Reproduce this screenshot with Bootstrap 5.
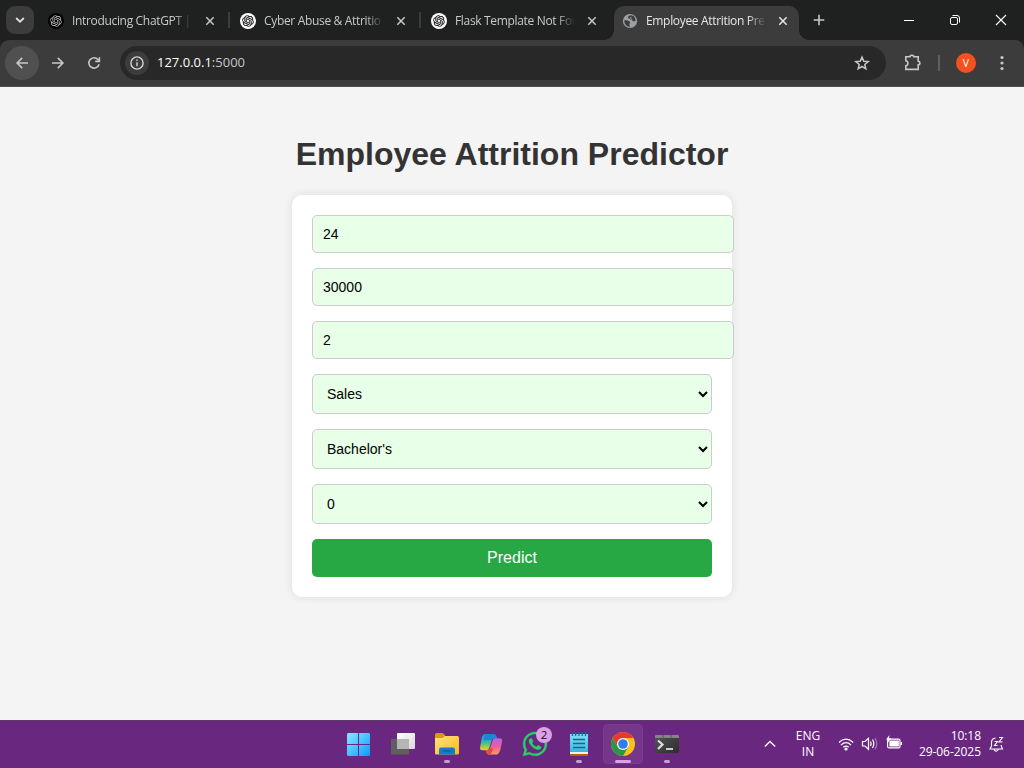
<!DOCTYPE html>
<html lang="en">
<head>
<meta charset="utf-8">
<title>Employee Attrition Predictor</title>
<link href="https://cdn.jsdelivr.net/npm/bootstrap@5.3.0/dist/css/bootstrap.min.css" rel="stylesheet">
<style>
body{height:768px;overflow:hidden;background:#f4f4f4;font-family:"Open Sans","Noto Sans",sans-serif}
svg{display:block;flex:none}
.strip{height:40px;background:#1f2120;padding-left:6px;color:#c8c8c8}
.tabsearch{width:28px;height:28px;border-radius:9px;background:#3c3c3c;margin:6px 7px 6px 0}
.tab{width:185px;height:34px;margin:6px 6px 0 0;padding:0 7px 5px 8px;position:relative}
.tab:nth-child(2){padding-left:7px}
.tab+.tab:not(.current)::before{content:"";position:absolute;left:-4px;top:6px;width:2px;height:16px;background:#3c3e3d}
.tab .label{width:121px;margin-left:8px;white-space:nowrap;font-size:12px;letter-spacing:-.33px;line-height:18px;-webkit-mask-image:linear-gradient(90deg,#000 84%,transparent 99%);mask-image:linear-gradient(90deg,#000 84%,transparent 99%)}
.tab.current{background:#3c3c3c;border-radius:10px 10px 0 0;color:#e6e6e6}
.tab.current::before,.tab.current::after{content:"";position:absolute;bottom:0;width:10px;height:10px}
.tab.current::before{left:-10px;background:radial-gradient(circle at 0 0,transparent 9.6px,#3c3c3c 10.2px)}
.tab.current::after{right:-10px;background:radial-gradient(circle at 100% 0,transparent 9.6px,#3c3c3c 10.2px)}
.toolwrap{background:#1f2120;height:47px}
.toolbar{height:47px;background:#3c3c3c;border-radius:9px 9px 0 0;border-bottom:1px solid #505050;padding-left:5px}
.round{width:34px;height:34px;border-radius:50%;margin-right:2px}
.round.on{background:#505050}
.omni{width:766px;height:34px;border-radius:17px;background:#282828;margin-left:7px;padding:0 14px 0 5px}
.info{width:24px;height:24px;border-radius:50%;background:#3c3c3c;margin-right:8px}
.url{font-size:13px;color:#c7c7c7;letter-spacing:0}
.url b{font-weight:400;color:#fff}
.page{height:633px;padding-top:47px;font-family:"Liberation Sans",Arial,sans-serif}
.page h1{font-size:32px;font-weight:700;line-height:40px;color:#333;margin:0 0 21px}
.predictor{width:440px;height:402px;padding:20px;background:#fff;border-radius:10px;box-shadow:0 0 10px rgba(0,0,0,.1);gap:15px}
.predictor input,.predictor select{background:#e8ffe8;border:1px solid #ccc;border-radius:5px;font-size:14px;color:#000;padding:10px;line-height:normal;outline:0}
.predictor input{width:422px;height:38px;flex:none}
.predictor select{width:400px;height:40px}
.predictor button{width:400px;height:38px;background:#28a745;border-radius:5px;border:0;color:#fff;font-size:16px}
.taskbar{height:48px;background:#6a277f;border-top:1px solid #5d3b68;color:#fff}
.apps{margin-left:337px;margin-top:-1px}
.app{position:relative}
.count{position:absolute;left:23px;top:7px;width:16px;height:16px;border-radius:50%;background:#dd9fe6;color:#111;font-size:11.5px;line-height:16px;text-align:center}
.tray{font-size:12px;line-height:16px;letter-spacing:-.05px;margin-left:74px;margin-top:-1px}
.lang{width:62px}
.clock{width:77px;margin-right:8px}
</style>
</head>
<body>
<svg width="0" height="0" class="position-absolute">
<defs>
<symbol id="knot" viewBox="0 0 24 24"><path d="M22.2819 9.8211a5.9847 5.9847 0 0 0-.5157-4.9108 6.0462 6.0462 0 0 0-6.5098-2.9A6.0651 6.0651 0 0 0 4.9807 4.1818a5.9847 5.9847 0 0 0-3.9977 2.9 6.0462 6.0462 0 0 0 .7427 7.0966 5.98 5.98 0 0 0 .511 4.9107 6.051 6.051 0 0 0 6.5146 2.9001A5.9847 5.9847 0 0 0 13.2599 24a6.0557 6.0557 0 0 0 5.7718-4.2058 5.9894 5.9894 0 0 0 3.9977-2.9001 6.0557 6.0557 0 0 0-.7475-7.0729zm-9.022 12.6081a4.4755 4.4755 0 0 1-2.8764-1.0408l.1419-.0804 4.7783-2.7582a.7948.7948 0 0 0 .3927-.6813v-6.7369l2.02 1.1686a.071.071 0 0 1 .038.052v5.5826a4.504 4.504 0 0 1-4.4945 4.4944zm-9.6607-4.1254a4.4708 4.4708 0 0 1-.5346-3.0137l.142.0852 4.783 2.7582a.7712.7712 0 0 0 .7806 0l5.8428-3.3685v2.3324a.0804.0804 0 0 1-.0332.0615L9.74 19.9502a4.4992 4.4992 0 0 1-6.1408-1.6464zM2.3408 7.8956a4.485 4.485 0 0 1 2.3655-1.9728V11.6a.7664.7664 0 0 0 .3879.6765l5.8144 3.3543-2.0201 1.1685a.0757.0757 0 0 1-.071 0l-4.8303-2.7865A4.504 4.504 0 0 1 2.3408 7.872zm16.5963 3.8558L13.1038 8.364 15.1192 7.2a.0757.0757 0 0 1 .071 0l4.8303 2.7913a4.4944 4.4944 0 0 1-.6765 8.1042v-5.6772a.79.79 0 0 0-.407-.667zm2.0107-3.0231l-.142-.0852-4.7735-2.7818a.7759.7759 0 0 0-.7854 0L9.409 9.2297V6.8974a.0662.0662 0 0 1 .0284-.0615l4.8303-2.7866a4.4992 4.4992 0 0 1 6.6802 4.66zM8.3065 12.863l-2.02-1.1638a.0804.0804 0 0 1-.038-.0567V6.0742a4.4992 4.4992 0 0 1 7.3757-3.4537l-.142.0805L8.704 5.459a.7948.7948 0 0 0-.3927.6813zm1.0976-2.3654l2.602-1.4998 2.6069 1.4998v2.9994l-2.5974 1.4997-2.6067-1.4997Z"/></symbol>
<symbol id="close" viewBox="0 0 10 10"><path d="M1.300 1.300l7.400 7.400M8.700 1.300L1.300 8.700" stroke="currentColor" stroke-width="1.500"/></symbol>
<linearGradient id="win" x1="0" y1="0" x2="1" y2="1"><stop stop-color="#90e4ff"/><stop offset=".5" stop-color="#46c4fb"/><stop offset="1" stop-color="#0a9bf8"/></linearGradient>
<linearGradient id="tvw" x1="0" y1="0" x2="1" y2="1"><stop stop-color="#fff"/><stop offset="1" stop-color="#d8d8d8"/></linearGradient>
<linearGradient id="fold" x1="0" y1="0" x2="1" y2="1"><stop stop-color="#ffe38a"/><stop offset="1" stop-color="#fdb90f"/></linearGradient>
<linearGradient id="cpa" x1="0" y1="0" x2="0" y2="1"><stop stop-color="#1f9be8"/><stop offset=".5" stop-color="#2fbfa0"/><stop offset="1" stop-color="#f4cf1d"/></linearGradient>
<linearGradient id="cpb" x1="0" y1="0" x2="0" y2="1"><stop stop-color="#b165ee"/><stop offset=".5" stop-color="#ee5c9a"/><stop offset="1" stop-color="#ff9a62"/></linearGradient>
<linearGradient id="note" x1="0" y1="0" x2="0" y2="1"><stop stop-color="#7ee0f5"/><stop offset="1" stop-color="#3fb3dc"/></linearGradient>
<linearGradient id="term" x1="0" y1="0" x2="1" y2="1"><stop stop-color="#555"/><stop offset="1" stop-color="#2c2c2c"/></linearGradient>
</defs></svg>

<header>
<div class="strip d-flex align-items-start">
  <div class="tabsearch d-flex align-items-center justify-content-center"><svg width="12" height="12" viewBox="0 0 12 12" fill="none" stroke="#e3e3e3" stroke-width="1.800"><path d="M2.200 4l3.800 3.800L9.800 4"/></svg></div>
  <div class="tab d-flex align-items-center">
    <svg width="16" height="16" viewBox="0 0 16 16"><circle cx="8" cy="8" r="8"/><use href="#knot" x="2.200" y="2.200" width="11.600" height="11.600" fill="#ccc"/></svg>
    <span class="label">Introducing ChatGPT |</span>
    <svg class="ms-auto me-1" width="10" height="10"><use href="#close"/></svg></div>
  <div class="tab d-flex align-items-center">
    <svg width="16" height="16" viewBox="0 0 16 16"><circle cx="8" cy="8" r="8" fill="#fff"/><use href="#knot" x="2.200" y="2.200" width="11.600" height="11.600" fill="#111" stroke="#111" stroke-width=".4"/></svg>
    <span class="label">Cyber Abuse &amp; Attritio</span>
    <svg class="ms-auto me-1" width="10" height="10"><use href="#close"/></svg></div>
  <div class="tab d-flex align-items-center">
    <svg width="16" height="16" viewBox="0 0 16 16"><circle cx="8" cy="8" r="8" fill="#fff"/><use href="#knot" x="2.200" y="2.200" width="11.600" height="11.600" fill="#111" stroke="#111" stroke-width=".4"/></svg>
    <span class="label">Flask Template Not Fou</span>
    <svg class="ms-auto me-1" width="10" height="10"><use href="#close"/></svg></div>
  <div class="tab current d-flex align-items-center">
    <svg width="16" height="16" viewBox="0 0 16 16"><circle cx="8" cy="8" r="7.100" fill="#9aa0a6"/><path d="M9.200 2.300C7.200 2.300 5.800 3.500 6 4.700 6.200 5.800 7.800 5.400 8.200 6.300 8.700 7.500 10 7 10.600 7.800 11.200 8.700 12.500 8.500 13.600 7.400 13.500 4.600 11.600 2.600 9.200 2.300M2.300 7.300C4 7.300 7 7.500 8 9 8.700 10.300 7 10.500 7.200 11.600 7.300 12.300 8.300 12.800 7.900 13.700 4.200 13.700 2.200 10.800 2.300 7.300" fill="#3c3c3c"/><path d="M9.500 4.200q-1.600.3-1.200 1.300t2 .8" fill="none" stroke="#9aa0a6"/></svg>
    <span class="label">Employee Attrition Pre</span>
    <svg class="ms-auto me-1" width="10" height="10"><use href="#close"/></svg></div>
  <svg class="ms-2" width="12" height="40" viewBox="0 0 12 40" stroke="#c7c7c7" stroke-width="1.600"><path d="M6 14.800v10.500M.7 20h10.600"/></svg>
  <svg class="ms-auto" width="130" height="40" viewBox="894 0 130 40" fill="none" stroke="#fff"><path d="M904 20.500h10"/><rect x="950.500" y="17.500" width="7" height="7" rx="1.500"/><path d="M952.500 15.500h4.500q2.500 0 2.500 2.500v4.500"/><path d="M996 15l10 10M1006 15l-10 10" stroke-width="1.100"/></svg>
</div>
<div class="toolwrap"><div class="toolbar d-flex align-items-center">
  <div class="round on d-flex align-items-center justify-content-center"><svg width="14" height="14" viewBox="0 0 14 14" fill="none" stroke="#c7c7c7" stroke-width="1.600"><path d="M13 7H2.500M7.200 1.900L2.100 7l5.100 5.100"/></svg></div>
  <div class="round d-flex align-items-center justify-content-center"><svg width="14" height="14" viewBox="0 0 14 14" fill="none" stroke="#c7c7c7" stroke-width="1.600"><path d="M1 7h10.500M6.800 1.900L11.900 7l-5.100 5.100"/></svg></div>
  <div class="round d-flex align-items-center justify-content-center"><svg width="14" height="14" viewBox="0 0 14 14" fill="none" stroke="#c7c7c7" stroke-width="1.600"><path d="M12.100 8.200A5.200 5.200 0 1 1 11 3.500L12.200 5"/><path d="M12.400 1.200v4.200H8.200"/></svg></div>
  <div class="omni d-flex align-items-center">
    <div class="info d-flex align-items-center justify-content-center"><svg width="14" height="14" viewBox="0 0 14 14" fill="none" stroke="#d5d5d5" stroke-width="1.400"><circle cx="7" cy="7" r="6.100"/><path d="M7 6.300v4M7 3.500v1.500"/></svg></div>
    <span class="url"><b>127.0.0.1</b>:5000</span>
    <svg class="ms-auto" width="20" height="20" viewBox="0 0 20 20" fill="none" stroke="#c7c7c7" stroke-width="1.500"><path d="M10 4.100l1.800 4.100 4.400.4-3.400 2.900 1 4.300L10 13.500l-3.800 2.300 1-4.300L3.800 8.600l4.400-.4z"/></svg>
  </div>
  <svg class="ms-3" width="122" height="46" viewBox="902 40 122 46" fill="none" stroke="#c7c7c7" stroke-width="1.600"><path d="M905.800 56.800h4.200c0-2 3.800-2 3.800 0h4.400v4.400c2.200 0 2.200 3.600 0 3.600v4.600h-12.400v-3.600c2.800-.6 2.800-4.500 0-5z"/><path d="M939 55v16" stroke="#5e5e5e" stroke-width="2"/><circle cx="966" cy="63" r="10" fill="#f4511e" stroke="none"/><text x="966" y="66.800" fill="#fff" stroke="none" font-size="10.500" text-anchor="middle">V</text><g fill="#c7c7c7" stroke="none"><circle cx="1002" cy="57.500" r="1.600"/><circle cx="1002" cy="63" r="1.600"/><circle cx="1002" cy="68.500" r="1.600"/></g></svg>
</div></div>
</header>

<main class="page d-flex flex-column align-items-center">
  <h1>Employee Attrition Predictor</h1>
  <form class="predictor d-flex flex-column">
    <input type="text" value="24">
    <input type="text" value="30000">
    <input type="text" value="2">
    <select><option>Sales</option></select>
    <select><option>Bachelor's</option></select>
    <select><option>0</option></select>
    <button type="button">Predict</button>
  </form>
</main>

<footer class="taskbar d-flex">
  <div class="apps d-flex">
    <svg width="44" height="48"><path d="M11 13h10v11H10V14zM22 13h10l1 1v10H22zM10 25h11v11H11l-1-1zM22 25h11v10l-1 1H22z" fill="url(#win)"/></svg>
    <svg width="44" height="48"><rect x="10" y="19" width="18" height="15.500" rx="1" fill="#5f5f5f"/><rect x="16" y="13" width="18" height="16" rx="1" fill="url(#tvw)"/><path d="M16 19h12v10H17l-1-1z" fill="#b5b5b5"/></svg>
    <svg width="44" height="48"><path d="M10 14.500q0-1.500 1.500-1.500h6l2.500 2h0v6H10z" fill="#dd9b07"/><path d="M10 18h7.500l2.500-2h12.500q1.500 0 1.500 1.500V33q0 1.500-1.500 1.500h-21Q10 34.500 10 33z" fill="url(#fold)"/><path d="M14 34.500V29.500q0-2 2-2h12q2 0 2 2v5z" fill="#137bd0"/><path d="M18 31h8" stroke="#0b55a0"/><rect x="19" y="40" width="6" height="3" rx="1.500" fill="#c2a0cc"/></svg>
    <svg width="44" height="48"><path d="M16.500 14h8q2 0 2.600 2l.7 2.300h-2.300q-2 0-2.700 2l-2.700 8q-.6 2-2.600 2h-3.800q-3.500 0-2.500-3.600l1.500-8.200Q13.500 14 16.500 14z" fill="url(#cpa)"/><path d="M16.500 14h8q2 0 2.600 2l.7 2.300h-2.300q-2 0-2.700 2h-8.400q.4-6.300 2.100-6.300z" fill="#1c79dc" opacity=".75"/><path d="M27.500 34.500h-8q-1.500 0-2-2l-.8-2.300h1.600q2 0 2.700-2l2.700-8q.6-2 2.600-2h4.200q3.500 0 2.500 3.600l-1.700 8.200q-1.800 4.500-3.800 4.500z" fill="url(#cpb)"/><path d="M18.300 30.200q2 0 2.700-2h3.200l-1.600 4.500q-.7 1.800-2.500 1.800-2 0-2.600-2l-.8-2.300z" fill="#e94b34"/></svg>
    <div class="app"><svg width="44" height="48"><g transform="translate(10 12) scale(1.500)" fill="#25d366" stroke="#25d366" stroke-width=".25"><path d="M13.601 2.326A7.850 7.850 0 0 0 7.994 0C3.627 0 .068 3.558.064 7.926c0 1.399.366 2.760 1.057 3.965L0 16l4.204-1.102a7.900 7.900 0 0 0 3.790.965h.004c4.368 0 7.926-3.558 7.930-7.930A7.900 7.900 0 0 0 13.600 2.326zM7.994 14.521a6.600 6.600 0 0 1-3.356-.92l-.24-.144-2.494.654.666-2.433-.156-.251a6.560 6.560 0 0 1-1.007-3.505c0-3.626 2.957-6.584 6.591-6.584a6.560 6.560 0 0 1 4.660 1.931 6.560 6.560 0 0 1 1.928 4.660c-.004 3.639-2.961 6.592-6.592 6.592m3.615-4.934c-.197-.099-1.170-.578-1.353-.646-.182-.065-.315-.099-.445.099-.133.197-.513.646-.627.775-.114.133-.232.148-.43.050-.197-.1-.836-.308-1.592-.985-.59-.525-.985-1.175-1.103-1.372-.114-.198-.011-.304.088-.403.087-.088.197-.232.296-.346.1-.114.133-.198.198-.33.065-.134.034-.248-.015-.347-.05-.099-.445-1.076-.612-1.470-.16-.389-.323-.335-.445-.34-.114-.007-.247-.007-.38-.007a.73.73 0 0 0-.529.247c-.182.198-.691.677-.691 1.654s.71 1.916.81 2.049c.098.133 1.394 2.132 3.383 2.992.47.205.84.326 1.129.418.475.152.904.129 1.246.080.38-.058 1.171-.48 1.338-.943.164-.464.164-.86.114-.943-.049-.084-.182-.133-.38-.232"/></g></svg><span class="count">2</span></div>
    <svg width="44" height="48"><path d="M13 14h18v18H13z" fill="url(#note)"/><path d="M13 32h18v2H13z" fill="#f5f0ea"/><path d="M13 34h18v1q0 1-1 1H14q-1 0-1-1z" fill="#b35c12"/><path d="M15.500 12v4M18.700 12v4M22 12v4M25.300 12v4M28.500 12v4" stroke="#146a92" stroke-width="1.300"/><path d="M16 19.500h12M16 23.500h12M16 27.500h12" stroke="#0d6a94" stroke-width="1.500"/><rect x="19" y="40" width="6" height="3" rx="1.500" fill="#c2a0cc"/></svg>
    <svg width="44" height="48"><rect x="2.500" y="4.500" width="39" height="39" rx="4" fill="#763689" stroke="#7b3d8e"/><g transform="translate(22 24)"><circle r="12" fill="#fbc116"/><path d="M-10.400-6A12 12 0 0 1 10.400-6H0L-5.200 3z" fill="#e33b2e"/><path d="M-10.400-6A12 12 0 0 0 0 12L5.200 3-5.200 3z" fill="#279847"/><circle r="6" fill="#fff"/><circle r="4.800" fill="#2f7de9"/></g><rect x="14" y="40" width="16" height="3" rx="1.500" fill="#dd9fe6"/></svg>
    <svg width="44" height="48"><rect x="10" y="15" width="24" height="18" rx="1" fill="url(#term)"/><path d="M10 18v-2q0-1 1-1h22q1 0 1 1v2z" fill="#858585"/><path d="M18 15v3M26 15v3" stroke="#555"/><path d="M13 20.500l4.500 4-4.500 4.500" fill="none" stroke="#ddd" stroke-width="2.200"/><path d="M21 29h7" stroke="#fff" stroke-width="1.500"/><rect x="19" y="40" width="6" height="3" rx="1.500" fill="#c2a0cc"/></svg>
  </div>
  <div class="tray d-flex align-items-center">
    <svg width="14" height="14" viewBox="0 0 14 14" fill="none" stroke="#fff" stroke-width="1.300"><path d="M1.800 9.500L7 4.500l5.200 5"/></svg>
    <div class="lang text-center">ENG<br>IN</div>
    <svg width="65" height="24" viewBox="839 732.500 65 24" fill="none" stroke="#fff" stroke-width="1.200"><path d="M838.800 743q7.200-6.600 14.400 0M841 745.500q5-4.600 10 0M843.300 747.800q2.700-2.500 5.400 0"/><circle cx="846" cy="749.500" r="1" fill="#fff"/><path d="M862.500 742h2.500l3.500-3.200v11L865 746.500h-2.500z"/><path d="M870.500 742q1.300 2.200 0 4.500M872.500 740q2.600 4.200 0 8.500"/><path d="M875 738.500q3.500 5.800 0 11.500" stroke="#a678b3"/><rect x="887.600" y="739.600" width="12.400" height="8.800" rx="1.500"/><path d="M890 741.500h8.200v5H890z" fill="#fff"/><path d="M901.300 742.500v3" stroke-width="1.500"/><path d="M889.500 735.500l-3.500 4.500h2.300l-.8 3.500 3.900-4.700h-2.400z" fill="#fff" stroke="none"/></svg>
    <div class="clock text-end">10:18<br>29-06-2025</div>
    <svg width="16" height="16" viewBox="989 736 16 16" fill="none" stroke="#fff" stroke-width="1.100"><path d="M995.500 738q-4 .6-4 4.500v3.500l-1.500 3h12.500l-1.300-3v-1M994 749.500q2 3.200 4.500 0M994.500 741.500h3l-3 4h3M999 737.500h3.500l-3.500 4.500h3.500"/></svg>
  </div>
</footer>
<script src="https://cdn.jsdelivr.net/npm/bootstrap@5.3.0/dist/js/bootstrap.bundle.min.js"></script>
</body>
</html>
